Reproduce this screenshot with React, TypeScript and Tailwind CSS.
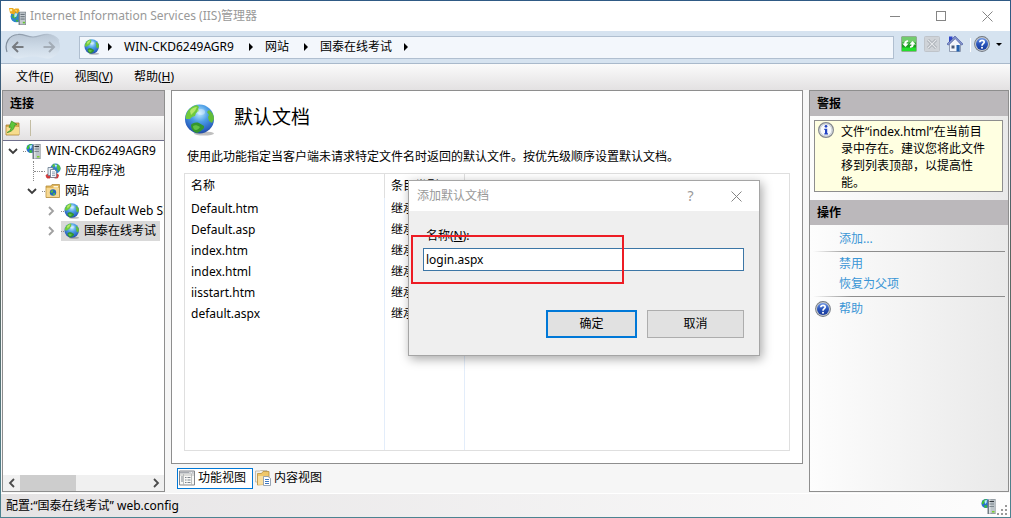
import { useId, useState, type ReactNode } from "react";

function Globe({ className }: { className: string }) {
  const id = useId();
  return (
    <svg viewBox="0 0 32 32" className={className} aria-hidden="true">
      <defs>
        <radialGradient id={id} cx="0.5" cy="0.3" r="0.75">
          <stop offset="0" stopColor="#c3ecff" />
          <stop offset="0.4" stopColor="#4d9fe6" />
          <stop offset="0.8" stopColor="#2a62c0" />
          <stop offset="1" stopColor="#1a3a90" />
        </radialGradient>
      </defs>
      <ellipse cx="20" cy="29.5" rx="10" ry="2" fill="#000" opacity="0.25" />
      <circle cx="15.5" cy="15" r="14.500" fill={`url(#${id})`} />
      <path d="M2 11C4 5 8 2 13 1l2 2-1 2 1 2-3 2-1 3-3 1-2 2-4 0c-.5-1-.5-3 0-4z" fill="#6fca3c" />
      <path d="M7 21c1-2 5-3 8-2l5 3 0 2c-2 2-4 4-7 5-4-1-6-4-6-8z" fill="#35962e" />
      <path d="M25 6c3 2 5 5 5 9l-2 4-3-2-1-4 1-2-2-3z" fill="#62bd38" />
      <path d="M9 22c2-1 4-1 7 1-1 2-3 3-4 3-2 0-3-2-3-4z" fill="#62c146" />
      <path d="M6 7c2-3 4-4 7-4l-2 4-4 4z" fill="#c6ee77" opacity="0.8" />
      <ellipse cx="17" cy="8" rx="4" ry="3" fill="#fff" opacity="0.35" />
    </svg>
  );
}

function ServerIcon({ className }: { className: string }) {
  return (
    <svg viewBox="0 0 16 16" className={className} aria-hidden="true">
      <circle cx="5" cy="5.500" r="4.600" fill="#2670d0" />
      <path d="M1 4C2 2 4 1 6 1L5 2.500 3.500 3.500 3 5.500 1 6.500zM3.500 7l2.500.5-.5 2.500-2-.5z" fill="#3fc22f" />
      <path d="M3.500 2.500 6 2 5.500 5 4 6z" fill="#b5f0ff" />
      <path d="M6.500 2.500 8 1h6.500v15h-8z" fill="#737d84" />
      <path d="M8 1.500h6v14H8z" fill="#bcc4c9" />
      <path d="M8 1.500h1.500v14H8z" fill="#dde2e5" />
      <path d="M8.500 3.500H13" stroke="#343b40" strokeWidth="1.100" />
      <path d="M8.500 6H13M8.500 8.500H13" stroke="#7d878e" />
      <path d="M11 13h2.500v1.500H11z" fill="#7bd12b" />
    </svg>
  );
}

function AppIcon({ className }: { className: string }) {
  return (
    <svg viewBox="0 0 16 16" className={className} aria-hidden="true">
      <circle cx="7" cy="8" r="5.500" fill="#2b86cf" />
      <path d="M3 7 6 5l2 2-2 3-3-1zM6 11l2.500 0v2L7 13z" fill="#43b042" />
      <path d="M5 5h3l-1 3-2 1z" fill="#b6e8fa" />
      <path d="M0 0h4l.5 1.500L6 .5h3l1 2-2 3-2-1.500L5 6 1 5z" fill="#eba91c" />
      <path d="M1 1h2v2H1zM5.500 1.500 7.500 2.500 7 3.500z" fill="#fff0a5" />
      <path d="M9 5 10.500 3.500H16V16H9z" fill="#737d84" />
      <path d="M10.200 4.200h5.300v11.300h-5.300z" fill="#c3cacf" />
      <path d="M10.800 6h4M10.800 8.200h4M10.800 10.400h4" stroke="#5c666e" strokeWidth="0.9" />
      <path d="M13 13h2v1.500h-2z" fill="#63c52d" />
    </svg>
  );
}

function FolderUpIcon() {
  return (
    <svg viewBox="0 0 16 16" className="size-4" aria-hidden="true">
      <path d="M1 5h5l1-2h7v12H1z" fill="#d9ae50" stroke="#a98234" strokeWidth="0.8" />
      <path d="M1.500 7H14v7.500H1.500z" fill="#f7dc8e" />
      <path d="M2 12.500c3-1 4-3 4-5.500L4 7.500 6.500 1 12 4.500 9.500 5.500C9.500 9 6.500 12 2 12.500z" fill="#5fc63b" stroke="#348422" strokeWidth="0.6" />
    </svg>
  );
}

function PoolIcon() {
  return (
    <svg viewBox="0 0 16 16" className="size-4 shrink-0" aria-hidden="true">
      <circle cx="10.500" cy="5.500" r="5" fill="#2c83cd" />
      <path d="M12 1c3 1 3.500 3 3.500 5l-2 2.500-1.500-3zM7 2.500l2-2 1.500 2-2 2z" fill="#55bc46" />
      <path d="M9.500 1.500 12 2l-1 3z" fill="#c2efff" />
      <path d="M.5 12.500C2 10.500 4 10 8 10s5 .5 6 2.500l-1 2.500H1.500z" fill="#d83e3e" />
      <path d="M3 4.500h5v8H3z" fill="#e4edf5" stroke="#66788b" strokeWidth="0.8" />
      <path d="M5.500 6.500h4l1.800 1.700v6.300H5.500z" fill="#fff" stroke="#66788b" strokeWidth="0.8" />
      <path d="M7 9h3M7 10.800h3M7 12.600h3" stroke="#6f89a3" strokeWidth="0.8" />
      <path d="M2 15h3M9.500 15h3" stroke="#b42d2d" strokeWidth="0.8" />
    </svg>
  );
}

function SitesIcon() {
  return (
    <svg viewBox="0 0 16 16" className="size-4 shrink-0" aria-hidden="true">
      <path d="M1 3h5l1-1.500h7.500V14.500H1z" fill="#e0b65d" stroke="#b58d3d" strokeWidth="0.8" />
      <path d="M1.500 5H14v9H1.500z" fill="#f6d892" />
      <path d="M8.500 3h4.500v1.500H8.500z" fill="#fff6dc" />
      <circle cx="8" cy="9.500" r="3.200" fill="#246abb" />
      <path d="M5.200 9l2-2 1 1-1 2zM8 10.500l2-.5v1.500L8.500 12.500z" fill="#5cc437" />
    </svg>
  );
}

function HelpIcon({ className }: { className: string }) {
  const id = useId();
  return (
    <svg viewBox="0 0 16 16" className={className} aria-hidden="true">
      <defs>
        <linearGradient id={id} x1="0" y1="0" x2="0" y2="1">
          <stop offset="0" stopColor="#6c94e6" />
          <stop offset="0.5" stopColor="#2a55bb" />
          <stop offset="1" stopColor="#17389a" />
        </linearGradient>
      </defs>
      <circle cx="8" cy="8" r="7.900" fill="#727880" />
      <circle cx="8" cy="8" r="7" fill="#c3c8cd" />
      <circle cx="8" cy="8" r="6" fill={`url(#${id})`} />
      <path d="M5.800 6.200C6 3.600 10.300 3.700 10.200 6.200 10.100 7.700 8 7.700 8 9.700" fill="none" stroke="#fff" strokeWidth="1.700" />
      <circle cx="8" cy="11.700" r="1" fill="#fff" />
    </svg>
  );
}

function InfoIcon() {
  return (
    <svg viewBox="0 0 16 16" className="size-4 shrink-0" aria-hidden="true">
      <circle cx="8" cy="8" r="7.400" fill="#dfe3e8" stroke="#85898e" strokeWidth="1.200" />
      <circle cx="8" cy="8" r="5.900" fill="#f8fafc" stroke="#c3cad2" strokeWidth="0.8" />
      <circle cx="8" cy="4.300" r="1.350" fill="#2343c2" />
      <path d="M6.300 6.800h2.900v4.400h.8v1.200H6.300v-1.200h.7V8h-.7z" fill="#2343c2" />
    </svg>
  );
}

function RefreshIcon() {
  return (
    <svg viewBox="0 0 16 16" className="size-4" aria-hidden="true">
      <rect x="0.500" y="0.500" width="15" height="15" rx="1" fill="#1f9e25" stroke="#93ac93" />
      <path d="M1 1h14v5.500H1z" fill="#72cc6e" />
      <path d="M1 11.500h14V15H1z" fill="#23e02c" />
      <path d="M1.200 7.500h2c0-2 1.300-3.300 3.800-3.300v1.500c-1.200.2-1.500.8-1.500 1.800h2.200L4.500 11zM14.800 8.500h-2c0 2-1.300 3.300-3.800 3.300v-1.500c1.200-.2 1.500-.8 1.500-1.800H8.300L11.500 5z" fill="#fff" />
    </svg>
  );
}

function StopIcon() {
  return (
    <svg viewBox="0 0 16 16" className="size-4" aria-hidden="true">
      <rect x="0.500" y="0.500" width="15" height="15" rx="1" fill="#cfd3d8" stroke="#bfc4ca" />
      <path d="m4 4 8 8m0-8-8 8" stroke="#9fa5ac" strokeWidth="2.800" />
      <path d="m4 4 8 8m0-8-8 8" stroke="#e4e7ea" strokeWidth="1.300" />
    </svg>
  );
}

function HomeIcon() {
  return (
    <svg viewBox="0 0 16 16" className="size-4" aria-hidden="true">
      <path d="M2 .5h3.500V5L2 7z" fill="#3046c8" />
      <path d="M2.500 8 8.500 2.500 13.500 8v7.500h-11z" fill="#f2f5fa" stroke="#7f8ba3" strokeWidth="0.8" />
      <path d="M.5 8.800 8 1.300l7.500 7.500" fill="none" stroke="#4558a4" strokeWidth="2.200" />
      <path d="M1 8.400 8 1.500l7 6.900" fill="none" stroke="#c2cdee" strokeWidth="0.900" />
      <path d="M4.500 9.500h3v3h-3z" fill="#4c5a75" />
      <path d="M9.500 9h3.200v6.500H9.500z" fill="#2361ae" />
    </svg>
  );
}

function FeaturesIcon() {
  return (
    <svg viewBox="0 0 16 16" className="size-4" aria-hidden="true">
      <path d="M.5 1h15v14H.500z" fill="#f8f8f6" stroke="#85878b" />
      <path d="M1 1.500h14v2H1z" fill="#a5a9af" />
      <path d="M10.500 2.500h4" stroke="#fff" strokeDasharray="1 .7" />
      <path d="M1 5h14M4.500 4v11M12.500 4v11" stroke="#b0b2b2" strokeWidth="0.8" />
      <path d="M2 7h2M2 9h2M2 11h2M6 7.500h1.500M6 10h1.500M6 12.500h1.500M8.500 7.500h3M8.500 10h3M8.500 12.500h3" stroke="#707882" strokeWidth="0.9" />
    </svg>
  );
}

function ContentIcon() {
  return (
    <svg viewBox="0 0 16 16" className="size-4" aria-hidden="true">
      <path d="M.5 1h4l1-.5H12V12H.500z" fill="#f1f0ec" stroke="#b9b2a1" strokeWidth="0.8" />
      <path d="M2.500 3.500h4L8 1.500h6V14L2.500 15z" fill="#efc76a" stroke="#b88f3e" strokeWidth="0.8" />
      <path d="M3 6h9l-1 8.500-8 .3z" fill="#f9dfa0" />
      <path d="M8.500 6.500h4.500l2.500 2v7h-7z" fill="#fff" stroke="#7f8fa3" strokeWidth="0.8" />
      <path d="M10 9.500h4M10 11.500h4M10 13.500h4" stroke="#3f79c4" />
    </svg>
  );
}

function Cross({ className }: { className: string }) {
  return (
    <svg viewBox="0 0 11 11" className={className} aria-hidden="true">
      <path d="m.5.5 10 10m0-10-10 10" stroke="#858585" strokeWidth="1" />
    </svg>
  );
}

function Chevron({ dir, className }: { dir: "down" | "left" | "right"; className: string }) {
  const paths = { down: "m1 3 4 4 4-4", left: "M7 1 3 5l4 4", right: "m3 1 4 4-4 4" };
  return (
    <svg viewBox="0 0 10 10" className={className} aria-hidden="true">
      <path d={paths[dir]} fill="none" stroke="currentColor" strokeWidth="1.800" />
    </svg>
  );
}

function CrumbArrow() {
  return (
    <svg viewBox="0 0 4 8" className="h-2 w-1 shrink-0" aria-hidden="true">
      <path d="M0 0v8l4-4z" fill="#000" />
    </svg>
  );
}

function NavArrows() {
  const id = useId();
  return (
    <svg viewBox="0 0 56 28" className="h-7 w-14" aria-hidden="true">
      <defs>
        <linearGradient id={id} x1="0" y1="0" x2="0" y2="1">
          <stop offset="0" stopColor="#b9c6d4" />
          <stop offset="0.5" stopColor="#ccd9e6" />
          <stop offset="1" stopColor="#dfe9f3" />
        </linearGradient>
        <linearGradient id={`${id}-edge`} x1="0" y1="0" x2="1" y2="0">
          <stop offset="0" stopColor="#7e8b99" />
          <stop offset="0.5" stopColor="#9eabba" />
          <stop offset="1" stopColor="#c3d0de" />
        </linearGradient>
      </defs>
      <path
        d="M13 1.500c6-1 9 2.500 15 2.500s10-3.500 16-2.500c7 1 11 6 11 12s-5 11-11 12c-6 0-9-2-16-2s-11 2-16 2C5 24.500 1 20 1 13.500s5-11 12-12z"
        fill={`url(#${id})`}
      />
      <path
        d="M2 19C-1 10 4 2 13 1.500c6-.5 9 2.500 15 2.500s10-3.500 16-2.500c5 .5 8 3 10 6"
        fill="none"
        stroke={`url(#${id}-edge)`}
        strokeWidth="1.200"
      />
      <path d="M18.500 14H8m5-5-5 5 5 5" fill="none" stroke="#777b80" strokeWidth="2" />
      <path d="M38.500 14H49m-5-5 5 5-5 5" fill="none" stroke="#a3acb6" strokeWidth="2" />
    </svg>
  );
}

function PanelHeading({ children }: { children: ReactNode }) {
  return <h2 className="h-[25px] shrink-0 bg-[#bbb8bb] pl-[7px] text-xs leading-[25px] font-bold">{children}</h2>;
}

type TreeRow = {
  label: string;
  indent: string;
  icon: ReactNode;
  open?: boolean;
  selected?: boolean;
};

const rows: TreeRow[] = [
  { label: "WIN-CKD6249AGR9", indent: "pl-0", icon: <ServerIcon className="size-4 shrink-0" />, open: true },
  { label: "应用程序池", indent: "pl-[19px]", icon: <PoolIcon /> },
  { label: "网站", indent: "pl-[19px]", icon: <SitesIcon />, open: true },
  { label: "Default Web Site", indent: "pl-[38px]", icon: <Globe className="size-4 shrink-0" />, open: false },
  { label: "国泰在线考试", indent: "pl-[38px]", icon: <Globe className="size-4 shrink-0" />, open: false, selected: true },
];

function Tree() {
  return (
    <ul role="tree" aria-label="连接" className="flex-1 overflow-hidden">
      {rows.map((row) => (
        <li
          key={row.label}
          role="treeitem"
          aria-selected={!!row.selected}
          className={`flex h-5 items-center whitespace-nowrap ${row.indent}`}
        >
          {row.open === undefined ? (
            <span className="flex h-5 w-5 shrink-0 items-center pl-[11px]">
              <span className="h-5 border-l border-dotted border-[#8a8a8a]" />
              <span className="w-2 border-t border-dotted border-[#8a8a8a]" />
            </span>
          ) : (
            <button
              type="button"
              aria-label={row.label}
              className={`flex h-5 w-5 shrink-0 items-center justify-center ${row.open ? "text-[#3c3c3c]" : "text-[#a0a0a0]"}`}
            >
              <Chevron dir={row.open ? "down" : "right"} className="size-[10px]" />
            </button>
          )}
          <span className={`flex h-5 items-center gap-1 pr-1 ${row.selected ? "bg-[#d9d9d9]" : ""}`}>
            <span className="-mr-1 w-[3px] shrink-0 border-t border-dotted border-[#8a8a8a]" />
            {row.icon}
            <span>{row.label}</span>
          </span>
        </li>
      ))}
    </ul>
  );
}

const documents = ["Default.htm", "Default.asp", "index.htm", "index.html", "iisstart.htm", "default.aspx"];

function DocumentTable() {
  return (
    <div className="mx-3 mt-[7px] mb-3 flex-1 border border-[#dfdfdf]">
      <table className="h-full w-full table-fixed border-separate border-spacing-0 text-left">
        <colgroup>
          <col className="w-[200px]" />
          <col className="w-20" />
          <col />
        </colgroup>
        <thead>
          <tr className="h-6">
            <th className="border-r border-[#dfdfdf] pl-1.5 font-normal">名称</th>
            <th className="border-r border-[#dfdfdf] pl-1.5 font-normal">条目类型</th>
            <th aria-label="备注" />
          </tr>
        </thead>
        <tbody>
          {documents.map((name) => (
            <tr key={name} className="h-[21px]">
              <td className="border-r border-[#e3edfa] pl-1.5">{name}</td>
              <td className="border-r border-[#e3edfa] pl-1.5">继承</td>
              <td />
            </tr>
          ))}
          <tr aria-hidden="true">
            <td className="border-r border-[#e3edfa]" />
            <td className="border-r border-[#e3edfa]" />
            <td />
          </tr>
        </tbody>
      </table>
    </div>
  );
}

function AddDialog() {
  const [name, setName] = useState("login.aspx");
  return (
    <div
      role="dialog"
      aria-label="添加默认文档"
      className="absolute top-[180px] left-[408px] w-[352px] border border-[#a5a5a5] bg-[#efefef] shadow-[2px_3px_10px_rgba(0,0,0,0.35)]"
    >
      <div className="flex h-[30px] items-center bg-white pl-2 text-[#999999]">
        <span className="flex-1">添加默认文档</span>
        <button type="button" aria-label="帮助" className="h-full w-[45px] text-sm">
          ?
        </button>
        <button type="button" aria-label="关闭" className="flex h-full w-[46px] items-center justify-center">
          <Cross className="size-[11px]" />
        </button>
      </div>
      <form className="flex flex-col pt-4 pr-[15px] pb-[17px] pl-[14px]" onSubmit={(e) => e.preventDefault()}>
        <label htmlFor="document-name" className="pl-[3px] leading-[18px]">
          名称(<u>N</u>):
        </label>
        <input
          id="document-name"
          value={name}
          onChange={(e) => setName(e.target.value)}
          className="mt-[3px] h-[23px] border border-[#3c76a6] bg-white px-[2px] outline-none"
        />
        <div className="mt-[39px] flex justify-end gap-[10px]">
          <button type="submit" className="h-7 w-[91px] border-2 border-[#0078d7] bg-[#e1e1e1]">
            确定
          </button>
          <button type="button" className="h-7 w-[97px] border border-[#adadad] bg-[#e1e1e1]">
            取消
          </button>
        </div>
      </form>
      <div className="pointer-events-none absolute top-[54px] left-[2px] h-[49px] w-[213px] border-2 border-[#ed1c24]" />
    </div>
  );
}

function ActionLink({ children }: { children: ReactNode }) {
  return (
    <a href="#" className="block h-5 pl-[29px] leading-5 text-[#3a96d6]">
      {children}
    </a>
  );
}

function Divider() {
  return <div className="mx-[3px] my-[2px] h-px bg-linear-to-r from-transparent via-[#8d8d8d] via-20% to-[#8d8d8d]" />;
}

export default function App() {
  return (
    <div className="relative flex h-screen flex-col bg-linear-to-b from-[#2f5a85] via-[#5b6660] to-[#4c8391] p-px font-['Noto_Sans','Noto_Sans_CJK_SC',sans-serif] text-xs text-black">
      <header className="flex h-[30px] shrink-0 items-center bg-white pl-2">
        <AppIcon className="size-[17px]" />
        <h1 className="flex-1 pl-1 text-[#999999]">Internet Information Services (IIS)管理器</h1>
        <button type="button" aria-label="最小化" className="flex h-full w-[46px] items-center justify-center">
          <span className="h-px w-[10px] bg-[#858585]" />
        </button>
        <button type="button" aria-label="最大化" className="flex h-full w-[46px] items-center justify-center">
          <span className="size-[10px] border border-[#858585]" />
        </button>
        <button type="button" aria-label="关闭" className="flex h-full w-[46px] items-center justify-center">
          <Cross className="size-[11px]" />
        </button>
      </header>

      <nav className="flex h-[33px] shrink-0 items-center border-b border-[#a9b9cb] bg-[#d6e3f0] pl-1">
        <button type="button" aria-label="后退和前进">
          <NavArrows />
        </button>
        <div className="ml-[18px] flex h-[23px] flex-1 items-center border border-[#b0bfd0] bg-[#f3f7fc] pl-1">
          <Globe className="size-4" />
          <span className="flex items-center gap-3 pl-2">
            <CrumbArrow />
            <a href="#" className="pr-[3px]">
              WIN-CKD6249AGR9
            </a>
            <CrumbArrow />
            <a href="#" className="pr-[3px]">
              网站
            </a>
            <CrumbArrow />
            <a href="#">国泰在线考试</a>
            <CrumbArrow />
          </span>
        </div>
        <div className="flex h-full items-start gap-[7px] pt-[5px] pr-2 pl-[7px]">
          <button type="button" aria-label="刷新">
            <RefreshIcon />
          </button>
          <button type="button" aria-label="停止">
            <StopIcon />
          </button>
          <button type="button" aria-label="主页">
            <HomeIcon />
          </button>
          <span className="mt-0.5 h-[14px] w-px bg-white" />
          <button type="button" aria-label="帮助" className="-ml-1 flex items-center gap-[6px]">
            <HelpIcon className="size-4" />
            <svg viewBox="0 0 6 3" className="h-[3px] w-[6px]" aria-hidden="true">
              <path d="M0 0h6L3 3z" fill="#000" />
            </svg>
          </button>
        </div>
      </nav>

      <div className="flex h-[26px] shrink-0 items-center gap-[21px] bg-linear-to-b from-[#fbfbfb] to-[#e3e1e2] pl-[15px]">
        <button type="button">
          文件(<u>F</u>)
        </button>
        <button type="button">
          视图(<u>V</u>)
        </button>
        <button type="button">
          帮助(<u>H</u>)
        </button>
      </div>

      <main className="flex min-h-0 flex-1 gap-[6px] bg-[#f6f6f6] pr-px pb-px pl-px">
        <section className="flex w-[163px] shrink-0 flex-col border border-[#8e8e8e] bg-white">
          <PanelHeading>连接</PanelHeading>
          <div className="flex h-[25px] shrink-0 items-center border-b border-[#6f6f8c] bg-linear-to-b from-[#fafafa] to-[#e3e1e2] pl-[2px]">
            <button type="button" aria-label="向上">
              <FolderUpIcon />
            </button>
            <span className="ml-[9px] h-4 w-px bg-[#c3bda3]" />
          </div>
          <Tree />
          <div className="flex h-4 shrink-0 items-center bg-[#f0f0f0] text-[#4b4b4b]">
            <button type="button" aria-label="向左滚动" className="flex w-[17px] justify-center">
              <Chevron dir="left" className="size-[10px]" />
            </button>
            <span className="h-full w-14 bg-[#cdcdcd]" />
            <button type="button" aria-label="向右滚动" className="ml-auto flex w-[17px] justify-center">
              <Chevron dir="right" className="size-[10px]" />
            </button>
          </div>
        </section>

        <div className="flex min-w-0 flex-1 flex-col">
          <section className="flex min-h-0 flex-1 flex-col border border-[#8e8e8e] bg-white">
            <div className="flex h-[57px] shrink-0 items-center gap-[18px] pl-3">
              <Globe className="size-8" />
              <h2 className="pb-1.5 text-[19px] leading-7">默认文档</h2>
            </div>
            <p className="pl-[15px] leading-[18px]">
              使用此功能指定当客户端未请求特定文件名时返回的默认文件。按优先级顺序设置默认文档。
            </p>
            <DocumentTable />
          </section>
          <div className="flex h-7 shrink-0 items-center gap-[2px] pl-[6px]">
            <button type="button" className="flex h-[21px] items-center gap-[3px] border border-[#0078d7] bg-white pr-[6px] pl-px">
              <FeaturesIcon />
              功能视图
            </button>
            <button type="button" className="flex h-[21px] items-center gap-[3px]">
              <ContentIcon />
              内容视图
            </button>
          </div>
        </div>

        <aside className="flex w-[200px] shrink-0 flex-col border border-[#8e8e8e] bg-linear-to-r from-[#fdfdfd] to-[#e9e9e9]">
          <PanelHeading>警报</PanelHeading>
          <div className="mt-1 mr-[5px] mb-2 ml-1 flex items-start gap-[7px] border border-[#8e8e8e] bg-[#ffffe1] pt-px pl-[3px]">
            <InfoIcon />
            <p className="w-[148px] pt-px leading-[17px]">文件“index.html”在当前目录中存在。建议您将此文件移到列表顶部，以提高性能。</p>
          </div>
          <PanelHeading>操作</PanelHeading>
          <div className="pt-1">
            <ActionLink>添加...</ActionLink>
            <Divider />
            <ActionLink>禁用</ActionLink>
            <ActionLink>恢复为父项</ActionLink>
            <Divider />
            <a href="#" className="flex h-5 items-center gap-2 pl-[5px] text-[#3a96d6]">
              <HelpIcon className="size-4" />
              帮助
            </a>
          </div>
        </aside>
      </main>

      <footer className="flex h-6 shrink-0 items-center border-t border-white bg-linear-to-r from-[#e5e3e4] to-[#fdfdfd] pr-[3px] pl-[5px]">
        <span className="flex-1">配置:“国泰在线考试” web.config</span>
        <ServerIcon className="size-4" />
        <svg viewBox="0 0 10 10" className="mt-2 size-[10px]" aria-hidden="true">
          <path d="M8 0h2v2H8zM4 4h2v2H4zM8 4h2v2H8zM0 8h2v2H0zM4 8h2v2H4zM8 8h2v2H8z" fill="#999" />
        </svg>
      </footer>

      <AddDialog />
    </div>
  );
}
